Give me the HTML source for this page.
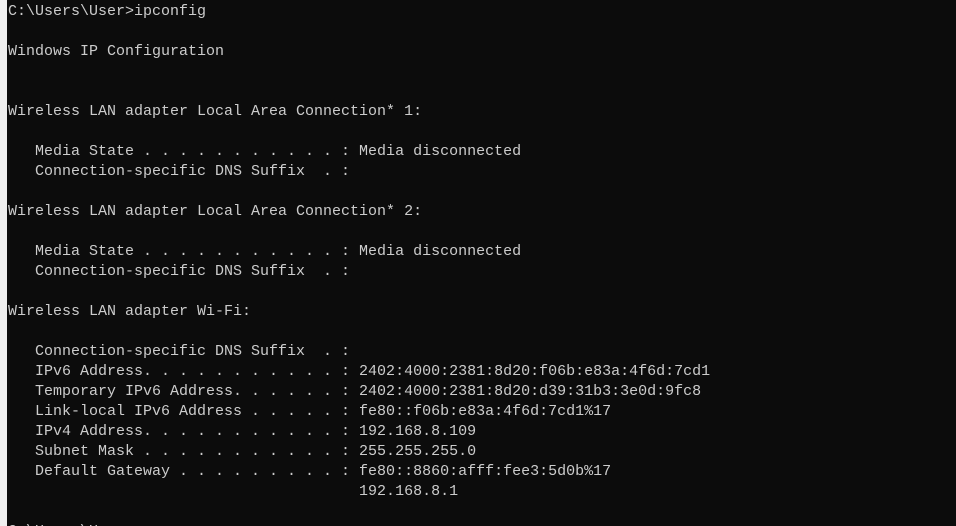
<!DOCTYPE html><html><head><style>
html,body{margin:0;padding:0;background:#0c0c0c;width:956px;height:526px;overflow:hidden;position:relative}
.s{position:absolute;left:0;top:0;width:7px;height:526px;background:#f0f0f0}
pre{position:absolute;left:8px;top:2px;margin:0;font-family:"Liberation Mono",monospace;font-size:15px;line-height:20px;color:#cccccc}
</style></head><body><div class="s"></div><pre>C:\Users\User>ipconfig

Windows IP Configuration


Wireless LAN adapter Local Area Connection* 1:

   Media State . . . . . . . . . . . : Media disconnected
   Connection-specific DNS Suffix  . :

Wireless LAN adapter Local Area Connection* 2:

   Media State . . . . . . . . . . . : Media disconnected
   Connection-specific DNS Suffix  . :

Wireless LAN adapter Wi-Fi:

   Connection-specific DNS Suffix  . :
   IPv6 Address. . . . . . . . . . . : 2402:4000:2381:8d20:f06b:e83a:4f6d:7cd1
   Temporary IPv6 Address. . . . . . : 2402:4000:2381:8d20:d39:31b3:3e0d:9fc8
   Link-local IPv6 Address . . . . . : fe80::f06b:e83a:4f6d:7cd1%17
   IPv4 Address. . . . . . . . . . . : 192.168.8.109
   Subnet Mask . . . . . . . . . . . : 255.255.255.0
   Default Gateway . . . . . . . . . : fe80::8860:afff:fee3:5d0b%17
                                       192.168.8.1

C:\Users\User></pre></body></html>
